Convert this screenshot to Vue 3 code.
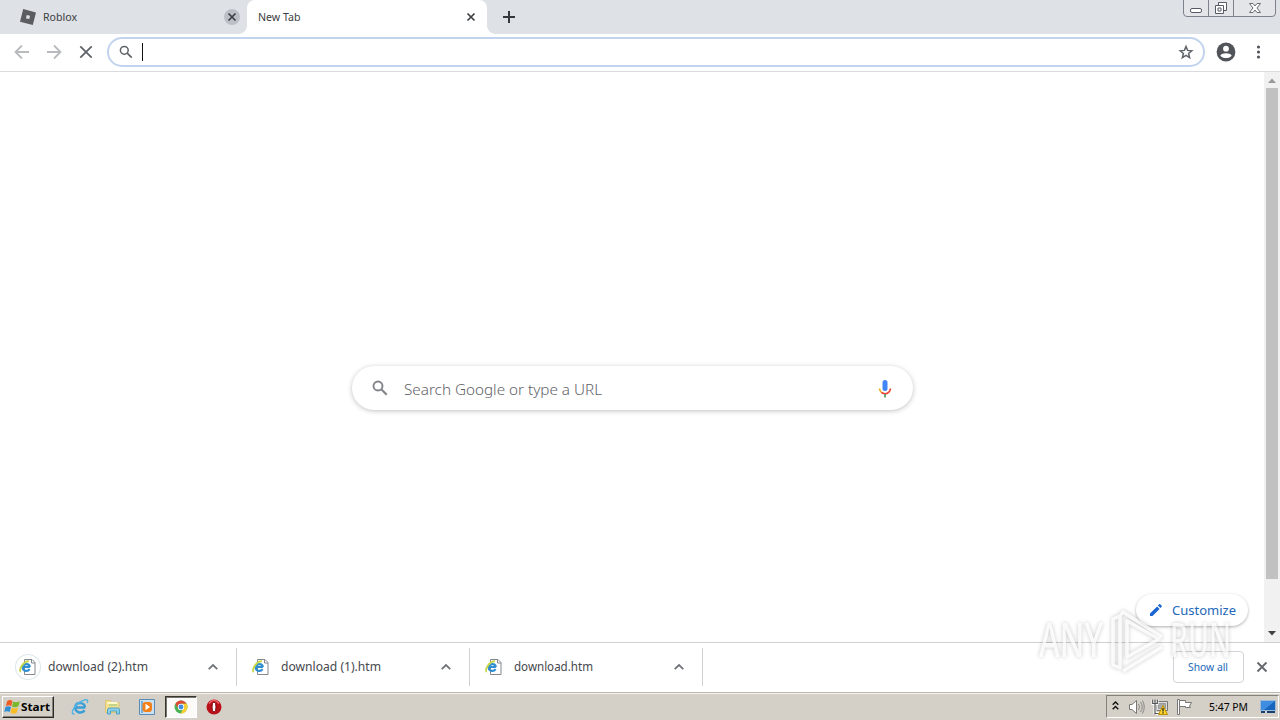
<!-- eslint-disable vue/multi-word-component-names -->
<script setup>
    import { ref } from "vue"

    const tabs = ref([
        { title: 'Roblox', width: 34, active: false, favicon: true },
        { title: 'New Tab', width: 42.5, active: true, favicon: false },
    ])
    const downloads = ref([
        { name: 'download (2).htm', ring: true, width: 100 },
        { name: 'download (1).htm', ring: false, width: 100 },
        { name: 'download.htm', ring: false, width: 79 },
    ])
</script>

<template>
    <main class="desktop">
        <header class="tab-strip">
            <div v-for="tab in tabs" :key="tab.title" class="tab" :class="{active: tab.active}">
                <svg v-if="tab.favicon" class="favicon" width="16" height="16" viewBox="0 0 16 16">
                    <path fill="#5b5d60" fill-rule="evenodd" d="M3.2 0 16 3.4 12.8 16 0 12.7ZM6.7 6.1 6 9.4 9.3 10.1 10 6.8Z" />
                </svg>
                <svg class="tab-title" width="50" height="16"><text x="0" y="12" :textLength="tab.width" lengthAdjust="spacingAndGlyphs">{{ tab.title }}</text></svg>
                <span class="tab-close">
                    <svg width="8" height="8" viewBox="0 0 8 8"><path d="M.5.5l7 7m0-7l-7 7" stroke="#3c4043" stroke-width="1.7" /></svg>
                </span>
            </div>
            <svg class="new-tab" width="12" height="12" viewBox="0 0 12 12"><path d="M6 0v12M0 6h12" stroke="#34373b" stroke-width="2" /></svg>
            <svg class="window-buttons" width="94" height="18" viewBox="0 0 94 18">
                <path d="M.5 0v13q0 3.500 3.500 3.500h85q3.500 0 3.500-3.500V0M25.500 0v16M50.500 0v16" fill="#e3e5e9" stroke="#7c818b" />
                <rect x="7.500" y="8.500" width="11" height="4" rx="1.500" fill="#fff" stroke="#555b66" />
                <path d="M35.500 2.500h8v8h-8z" fill="#fff" stroke="#555b66" />
                <path d="M32.500 5.500h8v8h-8zM35 8h3v3h-3z" fill="#fff" stroke="#555b66" />
                <path d="M66.500 3.500h3.500l2 2.500 2-2.500h3.500L74 8l3.500 4.500H74l-2-2.500-2 2.500h-3.500L70 8z" fill="#fff" stroke="#666b74" />
            </svg>
        </header>

        <nav class="toolbar">
            <svg class="nav-icon" width="16" height="16" viewBox="0 0 16 16"><path d="M15 8H2M8 1.500 1.500 8 8 14.500" fill="none" stroke="#b8babd" stroke-width="1.800" /></svg>
            <svg class="nav-icon" width="16" height="16" viewBox="0 0 16 16"><path d="M1 8h13M8 1.500 14.500 8 8 14.500" fill="none" stroke="#b8babd" stroke-width="1.800" /></svg>
            <svg class="nav-icon" width="16" height="16" viewBox="0 0 16 16"><path d="M2.300 2.300l11.400 11.400m0-11.400L2.300 13.700" stroke="#5f6368" stroke-width="1.800" /></svg>
            <div class="omnibox">
                <svg width="14" height="14" viewBox="0 0 14 14"><circle cx="5.300" cy="5.300" r="3.900" fill="none" stroke="#5f6368" stroke-width="1.500" /><path d="M8.200 8.200l4.500 4.500" stroke="#5f6368" stroke-width="1.700" /></svg>
                <span class="caret"></span>
                <svg class="star" width="16" height="16" viewBox="0 0 16 16"><path d="M8 2.500l1.600 3.900 4.200.4-3.200 2.700 1 4.100L8 11.400l-3.600 2.200 1-4.100-3.200-2.700 4.200-.4z" fill="none" stroke="#5f6368" stroke-width="1.500" /></svg>
            </div>
            <svg class="avatar" width="20" height="20" viewBox="0 0 20 20"><circle cx="10" cy="10" r="9.400" fill="#505358" /><circle cx="10" cy="6.700" r="2.900" fill="#fff" /><path d="M4.300 13.400C6 10.500 14 10.500 15.700 13.400 13.500 17 6.500 17 4.300 13.400" fill="#fff" /></svg>
            <svg class="menu" width="4" height="16" viewBox="0 0 4 16"><circle cx="2.500" cy="3" r="1.550" fill="#505358" /><circle cx="2.500" cy="8" r="1.550" fill="#505358" /><circle cx="2.500" cy="13" r="1.550" fill="#505358" /></svg>
        </nav>

        <section class="page">
            <div class="page-body">
                <div class="search-box">
                    <svg width="16" height="16" viewBox="0 0 16 16"><circle cx="6" cy="6" r="4.500" fill="none" stroke="#808388" stroke-width="1.900" /><path d="M9.300 9.300l5.400 5.400" stroke="#808388" stroke-width="2.100" /></svg>
                    <svg class="search-label" width="202" height="22"><text x="1" y="16" textLength="198" lengthAdjust="spacingAndGlyphs">Search Google or type a URL</text></svg>
                    <svg class="mic" width="14" height="18" viewBox="0 0 14 18">
                        <rect x="4.500" y="0" width="5" height="11" rx="2.500" fill="#4285f4" />
                        <path d="M1.500 8.500q.3 3 2.300 4.200" fill="none" stroke="#e8a91d" stroke-width="1.600" />
                        <path d="M3.500 12.500c4 2.700 8.500.5 9-4" fill="none" stroke="#ea4335" stroke-width="1.600" />
                        <path d="M7 14v3.500" stroke="#56945f" stroke-width="1.700" />
                    </svg>
                </div>
                <button class="customize">
                    <svg width="12" height="12" viewBox="0 0 12 12"><path d="M0 9.500V12h2.500L9.600 4.900 7.100 2.400zM7.900 1.600l2.500 2.500 1.300-1.300q.5-.5 0-1L10.200.3q-.5-.5-1 0z" fill="#1b66d2" /></svg>
                    <svg width="66" height="20"><text class="customize-label" x="0" y="15" textLength="64" lengthAdjust="spacingAndGlyphs">Customize</text></svg>
                </button>
            </div>
            <div class="scrollbar">
                <svg width="16" height="16"><path d="M4 11l4-4.500 4 4.500z" fill="#9a9a9a" /></svg>
                <span class="thumb"></span>
                <svg class="scroll-down" width="16" height="16"><path d="M4 6h8l-4 4.500z" fill="#404040" /></svg>
            </div>
        </section>

        <section class="shelf">
            <div v-for="item in downloads" :key="item.name" class="download">
                <span class="file-icon" :class="{ring: item.ring}">
                    <svg width="18" height="18" viewBox="0 0 18 18">
                        <path d="M5.500 1.500h7.500l3 3v12H5.500z" fill="#fff" stroke="#85888d" />
                        <path d="M12.500 1.500v3.500h3.500" fill="none" stroke="#85888d" />
                        <path d="M11 9H4M10.600 11.200C8.200 14.400 3.200 12.700 3.700 8.900 4.200 5.200 10.500 4.900 10.800 9.200" fill="none" stroke="#318fd1" stroke-width="2.200" />
                        <path d="M1.700 14C-1 12.300 4.600 2.700 10 3.200" fill="none" stroke="#c7d64a" stroke-width="1.900" />
                    </svg>
                </span>
                <svg class="file-name" width="104" height="20"><text x="0" y="14" :textLength="item.width" lengthAdjust="spacingAndGlyphs">{{ item.name }}</text></svg>
                <svg class="chevron" width="10" height="8" viewBox="0 0 10 8"><path d="M.7 6.200 5 2l4.300 4.200" fill="none" stroke="#71757a" stroke-width="1.800" /></svg>
            </div>
            <button class="show-all"><svg width="41" height="16"><text x="0" y="12" textLength="40" lengthAdjust="spacingAndGlyphs">Show all</text></svg></button>
            <svg class="shelf-close" width="12" height="12" viewBox="0 0 12 12"><path d="M1.500 1.500l9 9m0-9l-9 9" stroke="#66696d" stroke-width="1.900" /></svg>
        </section>

        <footer class="taskbar">
            <button class="start">
                <svg width="17" height="16" viewBox="0 0 17 16">
                    <path d="M3.200 2q3-2 5.300 0L7.300 7.200q-2.500-1.700-5.500 0z" fill="#ef5c25" />
                    <path d="M9.200 2.500q3 1.700 6.600-.5l-1.400 5.200q-3.200 2-6.300.2z" fill="#78b82a" />
                    <path d="M1.500 8q2.900-1.700 5.500 0l-1.300 5q-2.600-1.700-5.500 0z" fill="#308ed2" />
                    <path d="M7.800 8.500q2.900 1.800 6.300 0l-1.400 5.200q-3 2-6.200 0z" fill="#f8bd23" />
                </svg>
                <svg width="30" height="16"><text x="0" y="12" textLength="29" lengthAdjust="spacingAndGlyphs">Start</text></svg>
            </button>
            <svg class="launch ie" width="18" height="18" viewBox="0 0 18 18">
                <path d="M14.200 9.500H4.500M13.600 12.300C10.600 16.500 3.700 14.300 4.300 9 5 3.800 13.700 3.700 13.900 9.500" fill="none" stroke="#3a9fd8" stroke-width="2.500" />
                <path d="M3.500 16C-2.500 16.500 5 4.200 13.500 2c4-1 3.300 1.500 2.800 3" fill="none" stroke="#54b4e4" stroke-width="1.400" />
            </svg>
            <svg class="launch explorer" width="18" height="16" viewBox="0 0 18 16">
                <path d="M1.500 1.500h5l1 2h7.500v10H1.500z" fill="#f8df8b" stroke="#d9c47c" />
                <path d="M3.500 3h10v2h-10z" fill="#fff8c9" /><path d="M5 6h8" stroke="#8cc987" />
                <path d="M3.500 15v-4q0-2 2-2h8q2 0 2 2v4h-3v-3h-6v3z" fill="#8bcfe9" stroke="#4aa1c6" />
            </svg>
            <svg class="launch media" width="16" height="16" viewBox="0 0 16 16">
                <path d="M.5.500h15v15H.5z" fill="#cbe0f0" stroke="#5a8bb5" /><path d="M2 2h2v12H2z" fill="#78b0dc" />
                <rect x="3.500" y="3" width="9.500" height="10" rx="3" fill="#f28018" /><path d="M6.500 4.700 11 8l-4.500 3.300z" fill="#fff" />
            </svg>
            <div class="chrome-button">
                <svg width="14" height="14" viewBox="0 0 14 14">
                    <circle cx="7" cy="7" r="6.500" fill="#4caf50" />
                    <path d="M1.400 3.700A6.500 6.500 0 0 1 12.600 3.800H7A3.200 3.200 0 0 0 4.200 8.600z" fill="#df4936" />
                    <path d="M12.600 3.800A6.500 6.500 0 0 1 6.500 13.500L9.800 8.600A3.200 3.200 0 0 0 7 3.800z" fill="#f9cf32" />
                    <circle cx="7" cy="7" r="3.200" fill="#fff" /><circle cx="7" cy="7" r="2.400" fill="#438bdf" />
                </svg>
            </div>
            <svg class="launch opera" width="16" height="16" viewBox="0 0 16 16"><circle cx="8" cy="8" r="7.500" fill="#b81118" /><path d="M3 4.500Q8-2 13 4.500" stroke="#ed6468" fill="none" stroke-width="1.500" /><ellipse cx="8" cy="8" rx="2" ry="5" fill="#fff" stroke="#820b12" /></svg>
            <div class="tray">
                <svg class="expand" width="7" height="11" viewBox="0 0 7 11"><path d="M.7 3.700 3.500.900l2.800 2.800M.7 8.300l2.800-2.800 2.800 2.800" fill="none" stroke="#111" stroke-width="1.400" /></svg>
                <svg class="speaker" width="17" height="16" viewBox="0 0 17 16"><path d="M1.500 5.500H4l4.500-4v13L4 10.500H1.500z" fill="#fff" stroke="#777" /><path d="M10.500 5q2 3 0 6M12.500 3q3.500 5 0 10M14.500 1.500q3.500 6.500 0 13" fill="none" stroke="#888" /></svg>
                <svg class="network" width="16" height="16" viewBox="0 0 16 16">
                    <path d="M4.500 2.500h11v9h-11z" fill="#ddd" stroke="#777" /><path d="M6.500 4.500h7v5h-7z" fill="#aaa" stroke="#999" />
                    <path d="M1 .5v4h4v-4M3 4.500v11M3 14.500h5" fill="none" stroke="#fff" stroke-width="3" /><path d="M.7.500v4h4.600v-4M3 .5v15M3 14.500h5" fill="none" stroke="#555" stroke-width="1.200" />
                    <path d="M11 6.500l4.500 9h-9z" fill="#ffd42d" stroke="#ba9100" /><path d="M11 9v3.500m0 .8v1.200" stroke="#222" stroke-width="1.300" />
                </svg>
                <svg class="flag" width="17" height="16" viewBox="0 0 17 16"><path d="M1.500.500h2v15h-2z" fill="#fff" stroke="#777" /><path d="M3.500 1.500h6v2h6l-2 3.500 1 1.500h-5v-1h-6z" fill="#fff" stroke="#777" /></svg>
                <svg class="clock" width="41" height="16"><text x="0" y="12" textLength="39" lengthAdjust="spacingAndGlyphs">5:47 PM</text></svg>
                <svg class="monitor" width="16" height="14" viewBox="0 0 16 14"><path d="M.5.500h15v10H.5z" fill="#1765bd" stroke="#9bbbd7" /><path d="M1 1h14L4 10H1z" fill="#3f8de0" /><path d="M1 12h4m2 0h8" stroke="#173f70" stroke-width="2" /></svg>
            </div>
        </footer>

        <svg class="watermark" width="200" height="70" viewBox="0 0 200 70">
            <g class="watermark-text">
                <text x="3" y="51" textLength="64" lengthAdjust="spacingAndGlyphs">ANY</text>
                <text x="134" y="51" textLength="61" lengthAdjust="spacingAndGlyphs">RUN</text>
            </g>
            <g class="watermark-mark" fill="none">
                <path d="M84 10l-7 3v46l7 3V10l3-4 39 25" />
                <path d="M91 15v36l32-18zM87 65l39-24" />
            </g>
        </svg>
    </main>
</template>

<style>
    html, body {
        margin: 0;
        overflow: hidden;
        background: #fff;
    }
</style>

<style scoped>
    * {
        box-sizing: border-box;
    }
    svg {
        display: block;
        flex: none;
        overflow: visible;
    }
    button {
        font: inherit;
        padding: 0;
    }
    .desktop {
        position: relative;
        width: 1280px;
        height: 720px;
        display: flex;
        flex-direction: column;
        overflow: hidden;
        font-family: "Noto Sans", "DejaVu Sans", sans-serif;
    }

    /* Browser tabs */
    .tab-strip {
        display: flex;
        height: 34px;
        background: #dee1e6;
        flex: none;
    }
    .tab {
        width: 247px;
        height: 34px;
        padding: 0 7px 0 20px;
        display: flex;
        align-items: center;
        font-size: 11px;
        fill: #3c4043;
    }
    .tab.active {
        position: relative;
        width: 240px;
        padding: 0 8px 0 11px;
        background: #fff;
        border-radius: 8px 8px 0 0;
    }
    .tab.active::before,
    .tab.active::after {
        content: "";
        position: absolute;
        bottom: 0;
        width: 8px;
        height: 8px;
    }
    .tab.active::before {
        left: -8px;
        background: radial-gradient(circle at 0 0, transparent 7.5px, #fff 8px);
    }
    .tab.active::after {
        right: -8px;
        background: radial-gradient(circle at 100% 0, transparent 7.5px, #fff 8px);
    }
    .favicon {
        margin-right: 7px;
    }
    .tab-close {
        width: 16px;
        height: 16px;
        margin-left: auto;
        border-radius: 50%;
        display: grid;
        place-items: center;
        background: #bcc0c6;
    }
    .active .tab-close {
        background: none;
    }
    .new-tab {
        margin: 11px 0 0 16px;
    }
    .window-buttons {
        margin: 0 3px 0 auto;
    }

    /* Address bar */
    .toolbar {
        height: 38px;
        flex: none;
        display: flex;
        align-items: center;
        padding: 0 20px 1px 14px;
        border-bottom: 1px solid #d9dbde;
    }
    .nav-icon {
        margin-right: 16px;
    }
    .nav-icon:nth-child(3) {
        margin-right: 13px;
    }
    .omnibox {
        width: 1098px;
        height: 30px;
        display: flex;
        align-items: center;
        border: 2px solid #c1d3ed;
        border-radius: 15px;
        padding: 0 9px 0 10px;
    }
    .caret {
        width: 1px;
        height: 18px;
        background: #111;
        margin-left: 9px;
    }
    .star {
        margin-left: auto;
    }
    .avatar {
        margin-left: 11px;
    }
    .menu {
        margin-left: auto;
    }

    /* New tab page */
    .page {
        height: 570px;
        flex: none;
        display: flex;
    }
    .page-body {
        width: 1264px;
        display: flex;
        flex-direction: column;
        align-items: center;
    }
    .search-box {
        width: 561px;
        height: 44px;
        margin-top: 294px;
        padding: 0 21px 0 20px;
        display: flex;
        align-items: center;
        border-radius: 22px;
        box-shadow: 0 1px 5px rgba(32, 33, 36, .28);
    }
    .search-label {
        margin: 4px 0 0 15px;
        font-size: 15px;
        font-weight: 300;
        fill: #5f6368;
    }
    .mic {
        margin: 1px 0 0 auto;
    }
    .customize {
        width: 112px;
        height: 32px;
        margin: auto 16px 16px auto;
        display: flex;
        align-items: center;
        gap: 10px;
        padding-left: 14px;
        border: 0;
        border-radius: 16px;
        background: #fff;
        box-shadow: 0 1px 3px rgba(0, 0, 0, .32);
    }
    .customize-label {
        fill: #2368ba;
        font-size: 13px;
    }
    .scrollbar {
        width: 16px;
        display: flex;
        flex-direction: column;
        background: #f1f1f1;
    }
    .thumb {
        width: 12px;
        height: 491px;
        margin: 0 2px;
        background: #c1c1c1;
    }
    .scroll-down {
        margin: auto 0 1px;
    }

    /* Downloads */
    .shelf {
        height: 50px;
        flex: none;
        display: flex;
        align-items: center;
        padding-bottom: 1px;
        border-top: 1px solid #cfd0d2;
        background: #fff;
    }
    .download {
        width: 233px;
        height: 38px;
        display: flex;
        align-items: center;
        border-right: 1px solid #cfd1d4;
        padding: 0 18px 0 12px;
    }
    .download:first-child {
        width: 237px;
        padding-left: 16px;
    }
    .file-icon {
        width: 24px;
        height: 24px;
        display: grid;
        place-items: center;
        border-radius: 50%;
    }
    .ring {
        box-shadow: 0 0 0 1px #dce7e9;
    }
    .file-name {
        margin: 0 0 1px 8px;
        font-size: 13px;
        fill: #45484d;
    }
    .chevron {
        margin-left: auto;
    }
    .show-all {
        width: 71px;
        height: 32px;
        margin-left: auto;
        display: grid;
        place-items: center;
        border: 1px solid #d1d4d8;
        border-radius: 4px;
        background: #fff;
        font-size: 11px;
        fill: #2368ba;
    }
    .shelf-close {
        margin: 0 12px;
    }

    /* Windows taskbar */
    .taskbar {
        height: 28px;
        padding: 2px 1px 2px 2px;
        flex: none;
        display: flex;
        align-items: center;
        background: #d4d0c8;
        border-top: 1px solid #bab7b2;
        box-shadow: inset 0 1px #f5f3ef;
    }
    .start {
        width: 52px;
        height: 22px;
        display: flex;
        align-items: center;
        gap: 0;
        padding-left: 1px;
        border: 1px solid;
        border-color: #fff #292929 #292929 #fff;
        box-shadow: inset -1px -1px #858179;
        background: #d4d0c8;
        color: #000;
        font-size: 11px;
        font-weight: 700;
    }
    .ie {
        margin-left: 17px;
    }
    .explorer {
        margin-left: 15px;
    }
    .media {
        margin-left: 17px;
    }
    .chrome-button {
        width: 32px;
        height: 22px;
        display: grid;
        place-items: center;
        margin-left: 10px;
        border: 1px solid;
        border-color: #38352f #fff #fff #38352f;
        box-shadow: inset 1px 1px #77736e;
        background: #fbfaf8;
    }
    .opera {
        margin-left: 9px;
    }
    .tray {
        width: 173px;
        height: 23px;
        margin-left: auto;
        display: flex;
        align-items: center;
        padding-left: 5px;
        border: 1px solid;
        border-color: #85827a #fff #fff #85827a;
        font-size: 11px;
    }
    .speaker {
        margin-left: 9px;
    }
    .network {
        margin-left: 7px;
    }
    .flag {
        margin-left: 8px;
    }
    .clock {
        margin-left: 16px;
    }
    .monitor {
        margin-left: 10px;
    }

    /* Watermark overlay */
    .watermark {
        position: absolute;
        left: 1036px;
        top: 606px;
        pointer-events: none;
        opacity: .8;
        filter: drop-shadow(0 0 2px rgba(0, 0, 0, .32));
    }
    .watermark-text {
        font-size: 48px;
        font-weight: 500;
        fill: rgba(255, 255, 255, .85);
    }
    .watermark-mark {
        stroke: rgba(255, 255, 255, .85);
        stroke-width: 3.5;
        stroke-linejoin: round;
    }
</style>
